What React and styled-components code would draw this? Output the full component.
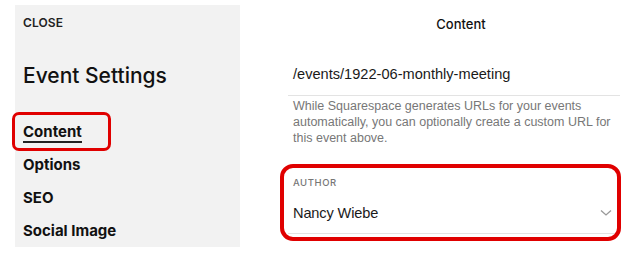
import React from "react";
import styled, { createGlobalStyle } from "styled-components";

const Global = createGlobalStyle`
  html, body { margin: 0; padding: 0; background: #fff; }
  body { font-family: Inter, "Liberation Sans", Arial, sans-serif; color: #1a1a1a; }
`;

const Page = styled.div`
  display: flex;
  width: 637px;
  height: 260px;
  overflow: hidden;
`;

const Sidebar = styled.aside`
  margin: 5px 0 0 15px;
  width: 225px;
  height: 242px;
  background: #f2f2f2;
  box-sizing: border-box;
  padding: 11px 0 0 8px;
  display: flex;
  flex-direction: column;
`;

const Close = styled.div`
  font-size: 12px;
  font-weight: 600;
  letter-spacing: 0.01em;
  line-height: 13px;
  color: #222;
`;

const Title = styled.h1`
  margin: 35px 0 0 0;
  font-size: 21px;
  font-weight: 500;
  line-height: 24px;
  color: #111;
`;

const Nav = styled.nav`
  margin-top: 34px;
  display: flex;
  flex-direction: column;
  gap: 12px;
`;

const NavItem = styled.div`
  position: relative;
  font-size: 15px;
  font-weight: 700;
  line-height: 19px;
  color: #111;
  align-self: flex-start;
  border-bottom: 2px solid ${p => (p.$active ? "#222" : "transparent")};
`;

const Highlight = styled.span`
  position: absolute;
  left: ${p => p.$l}px;
  top: ${p => p.$t}px;
  right: ${p => p.$r}px;
  bottom: ${p => p.$b}px;
  border: ${p => p.$w}px solid #e00000;
  border-radius: ${p => p.$rad}px;
  pointer-events: none;
`;

const Main = styled.main`
  flex: 1;
  display: flex;
  flex-direction: column;
  padding: 0 17px 0 48px;
`;

const Header = styled.div`
  text-align: center;
  padding: 16px 0 0 14px;
  font-size: 13px;
  font-weight: 500;
  line-height: 16px;
  color: #111;
`;

const Field = styled.div`
  margin-top: 32px;
  padding: 0 5px 11px;
  border-bottom: 1px solid #e3e3e3;
  font-family: "Liberation Sans", Arial, sans-serif;
  font-size: 14.6px;
  line-height: 20px;
  color: #1a1a1a;
`;

const Help = styled.p`
  margin: 2px 0 0 0;
  padding: 0 5px;
  font-family: "Liberation Sans", Arial, sans-serif;
  font-size: 12.5px;
  line-height: 16px;
  color: #777;
`;

const SelectBox = styled.div`
  position: relative;
  margin-top: 21px;
  padding: 10px 5px 0;
  border-bottom: 1px solid #e3e3e3;
`;

const Label = styled.div`
  font-size: 9.5px;
  font-weight: 500;
  letter-spacing: 0.06em;
  text-transform: uppercase;
  color: #777;
  line-height: 12px;
`;

const SelectRow = styled.div`
  display: flex;
  align-items: center;
  justify-content: space-between;
  box-sizing: border-box;
  height: 44px;
  padding: 4px 3px 0 0;
  font-family: "Liberation Sans", Arial, sans-serif;
  font-size: 14.6px;
  letter-spacing: -0.01em;
  color: #1a1a1a;
`;

const Chevron = () => (
  <svg width="12" height="8" viewBox="0 0 12 8" fill="none">
    <path d="M1 1.5 L6 6 L11 1.5" stroke="#999" strokeWidth="1.3" />
  </svg>
);

export default function App() {
  return (
    <Page>
      <Global />
      <Sidebar>
        <Close>CLOSE</Close>
        <Title>Event Settings</Title>
        <Nav>
          <NavItem $active>
            Content
            <Highlight $l={-11} $t={-10} $r={-29} $b={-10} $rad={7} $w={3} />
          </NavItem>
          <NavItem>Options</NavItem>
          <NavItem>SEO</NavItem>
          <NavItem>Social Image</NavItem>
        </Nav>
      </Sidebar>
      <Main>
        <Header>Content</Header>
        <Field>/events/1922-06-monthly-meeting</Field>
        <Help>
          While Squarespace generates URLs for your events automatically, you can
          optionally create a custom URL for this event above.
        </Help>
        <SelectBox>
          <Label>Author</Label>
          <SelectRow>
            Nancy Wiebe
            <Chevron />
          </SelectRow>
          <Highlight $l={-8} $t={-3} $r={-1} $b={-8} $rad={13} $w={4} />
        </SelectBox>
      </Main>
    </Page>
  );
}
